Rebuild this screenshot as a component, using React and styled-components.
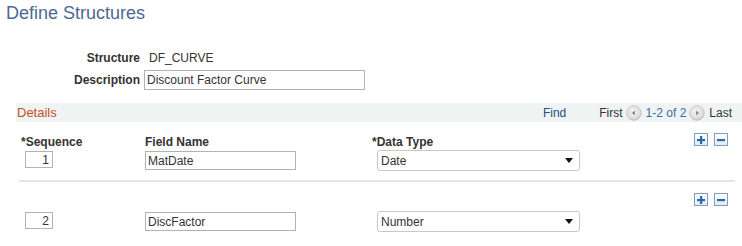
import styled, { createGlobalStyle } from 'styled-components';

const GlobalStyle = createGlobalStyle`
  html, body {
    margin: 0;
    padding: 0;
    background: #ffffff;
  }
  body {
    font-family: "Liberation Sans", Arial, sans-serif;
    font-size: 12px;
    color: #333333;
  }
`;

const Page = styled.div`
  width: 742px;
  display: flex;
  flex-direction: column;
`;

const Title = styled.h1`
  margin: 0;
  padding-left: 6px;
  font-size: 18px;
  line-height: 26px;
  font-weight: normal;
  color: #4b6a93;
`;

const HeaderForm = styled.div`
  display: grid;
  grid-template-columns: 140px 1fr;
  column-gap: 4px;
  row-gap: 2px;
  margin-top: 22px;
  align-items: center;
`;

const FormLabel = styled.label`
  text-align: right;
  font-weight: bold;
  line-height: 20px;
  color: #333333;
`;

const StaticValue = styled.span`
  padding-left: 5px;
  line-height: 20px;
`;

const TextBox = styled.input`
  box-sizing: border-box;
  width: ${(p) => p.$width}px;
  height: ${(p) => p.$height || 19}px;
  margin: 0;
  margin-left: ${(p) => p.$indent || 0}px;
  padding: 0 ${(p) => (p.$right ? 3 : 2)}px 0 2px;
  border: 1px solid #b3b3b3;
  border-radius: 0;
  font-family: "Liberation Sans", Arial, sans-serif;
  font-size: 12px;
  color: #333333;
  text-align: ${(p) => (p.$right ? 'right' : 'left')};
  background: #ffffff;
  outline: none;
`;

const Section = styled.section`
  margin-top: 13px;
  margin-left: 16px;
  display: flex;
  flex-direction: column;
`;

const SectionBar = styled.div`
  height: 19px;
  background: #f0f3f4;
  display: flex;
  align-items: center;
  justify-content: space-between;
  padding-left: 1px;
  padding-right: 10px;
`;

const SectionTitle = styled.span`
  font-size: 13px;
  color: #c4521d;
`;

const Nav = styled.div`
  display: flex;
  align-items: center;
  font-size: 12px;
`;

const NavLink = styled.span`
  color: ${(p) => p.$color || '#333333'};
  margin-right: ${(p) => p.$gap || 0}px;
`;

const NavIcon = styled.svg`
  width: 16px;
  height: 16px;
  margin: 0 4px 0 3px;
  display: block;
`;

const Row = styled.div`
  display: grid;
  grid-template-columns: 124px 227px 1fr auto;
  margin: 0 7px 0 3px;
  padding: 11px 7px ${(p) => (p.$last ? 0 : 9)}px 2px;
  border-bottom: ${(p) => (p.$last ? 'none' : '2px solid #e6e6e6')};
`;

const Cell = styled.div`
  display: flex;
  flex-direction: column;
  align-items: flex-start;
  padding-top: 2px;
`;

const ColLabel = styled.span`
  font-weight: bold;
  line-height: 14px;
  height: 14px;
  margin-bottom: ${(p) => p.$after || 2}px;
  visibility: ${(p) => (p.$hidden ? 'hidden' : 'visible')};
  white-space: nowrap;
`;

const Buttons = styled.div`
  display: flex;
  gap: 6px;
  align-self: start;
`;

const RowButton = styled.button`
  box-sizing: border-box;
  width: 14px;
  height: 13px;
  padding: 0;
  border: 1px solid #7f9fc2;
  background: linear-gradient(#ffffff, #e2e9f0);
  display: flex;
  align-items: center;
  justify-content: center;
  cursor: pointer;
`;

const Select = styled.div`
  box-sizing: border-box;
  width: 203px;
  height: 21px;
  margin-top: -1px;
  margin-left: 5px;
  border: 1px solid #c8c8c8;
  border-radius: 3px;
  background: #ffffff;
  display: flex;
  align-items: center;
  justify-content: space-between;
  padding: 0 6px 0 3px;
  font-size: 12px;
  color: #333333;
`;

const Caret = () => (
  <svg width="8" height="5" viewBox="0 0 8 5">
    <polygon points="0,0 8,0 4,5" fill="#111111" />
  </svg>
);

const ArrowIcon = ({ dir }) => (
  <NavIcon viewBox="0 0 16 16">
    <defs>
      <radialGradient id={`g${dir}`} cx="45%" cy="40%" r="65%">
        <stop offset="0%" stopColor="#f4f4f4" />
        <stop offset="70%" stopColor="#dedede" />
        <stop offset="100%" stopColor="#bcbcbc" />
      </radialGradient>
    </defs>
    <circle cx="8" cy="8" r="7.3" fill={`url(#g${dir})`} stroke="#c2c2c2" strokeWidth="0.8" />
    {dir === 'left' ? (
      <polygon points="5.4,8 9.2,4.8 9.2,11.2" fill="#7d7d7d" stroke="#ffffff" strokeWidth="0.7" />
    ) : (
      <polygon points="10.6,8 6.8,4.8 6.8,11.2" fill="#7d7d7d" stroke="#ffffff" strokeWidth="0.7" />
    )}
  </NavIcon>
);

const PlusMinus = () => (
  <Buttons>
    <RowButton aria-label="Add row">
      <svg width="10" height="10" viewBox="0 0 10 10">
        <rect x="4" y="1" width="2.2" height="8" fill="#2d69ad" />
        <rect x="1" y="4" width="8" height="2.2" fill="#2d69ad" />
      </svg>
    </RowButton>
    <RowButton aria-label="Delete row">
      <svg width="10" height="10" viewBox="0 0 10 10">
        <rect x="1" y="4" width="8" height="2.2" fill="#2d69ad" />
      </svg>
    </RowButton>
  </Buttons>
);

const rows = [
  { seq: '1', field: 'MatDate', type: 'Date' },
  { seq: '2', field: 'DiscFactor', type: 'Number' },
];

export default function App() {
  return (
    <Page>
      <GlobalStyle />
      <Title>Define Structures</Title>
      <HeaderForm>
        <FormLabel>Structure</FormLabel>
        <StaticValue>DF_CURVE</StaticValue>
        <FormLabel>Description</FormLabel>
        <TextBox $width={221} $height={20} readOnly value="Discount Factor Curve" />
      </HeaderForm>

      <Section>
        <SectionBar>
          <SectionTitle>Details</SectionTitle>
          <Nav>
            <NavLink $color="#25507f" $gap={33}>Find</NavLink>
            <NavLink>First</NavLink>
            <ArrowIcon dir="left" />
            <NavLink $color="#3a6ea5">1-2 of 2</NavLink>
            <ArrowIcon dir="right" />
            <NavLink>Last</NavLink>
          </Nav>
        </SectionBar>

        {rows.map((r, i) => {
          const first = i === 0;
          const last = i === rows.length - 1;
          return (
            <Row key={r.seq} $last={last}>
              <Cell>
                <ColLabel $hidden={!first} $after={first ? 2 : 3}>*Sequence</ColLabel>
                <TextBox $width={28} $height={17} $indent={4} $right readOnly value={r.seq} />
              </Cell>
              <Cell>
                <ColLabel $hidden={!first} $after={first ? 2 : 3}>Field Name</ColLabel>
                <TextBox $width={151} $height={19} readOnly value={r.field} />
              </Cell>
              <Cell>
                <ColLabel $hidden={!first} $after={first ? 2 : 3}>*Data Type</ColLabel>
                <Select role="combobox">
                  <span>{r.type}</span>
                  <Caret />
                </Select>
              </Cell>
              <PlusMinus />
            </Row>
          );
        })}
      </Section>
    </Page>
  );
}
